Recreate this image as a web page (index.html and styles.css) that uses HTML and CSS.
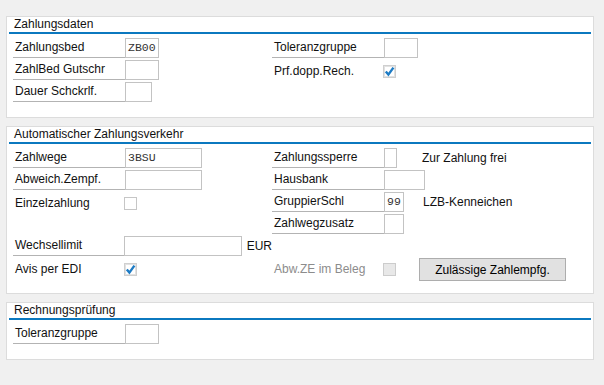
FILE: index.html
```html
<!DOCTYPE html>
<html lang="de">
<head>
  <meta charset="UTF-8" />
  <title>Zahlungsverkehr</title>
  <link rel="stylesheet" href="styles.css">
</head>
<body>
  <div class="group">
    <div class="title">Zahlungsdaten</div>
    <div class="grid">
      <div class="cell"><span class="lbl">Zahlungsbed</span><span class="inp w34">ZB00</span></div>
      <div class="cell"><span class="lbl">Toleranzgruppe</span><span class="inp w34"></span></div>
      <div class="cell"><span class="lbl">ZahlBed Gutschr</span><span class="inp w34"></span></div>
      <div class="cell chk"><span class="lbl plain">Prf.dopp.Rech.</span><span class="box on"><svg viewBox="0 0 11 11"><path d="M1.8 5.4 L4.4 8.6 L9.4 1.6"/></svg></span></div>
      <div class="cell"><span class="lbl">Dauer Schckrlf.</span><span class="inp w27"></span></div>
      <div class="cell"></div>
    </div>
  </div>

  <div class="group">
    <div class="title">Automatischer Zahlungsverkehr</div>
    <div class="grid">
      <div class="cell"><span class="lbl">Zahlwege</span><span class="inp w77">3BSU</span></div>
      <div class="cell"><span class="lbl">Zahlungssperre</span><span class="inp w13"></span><span class="note n25">Zur Zahlung frei</span></div>
      <div class="cell"><span class="lbl">Abweich.Zempf.</span><span class="inp w77"></span></div>
      <div class="cell"><span class="lbl">Hausbank</span><span class="inp w41"></span></div>
      <div class="cell chk"><span class="lbl plain">Einzelzahlung</span><span class="box"></span></div>
      <div class="cell"><span class="lbl">GruppierSchl</span><span class="inp w20">99</span><span class="note n18">LZB-Kenneichen</span></div>
      <div class="cell"></div>
      <div class="cell"><span class="lbl">Zahlwegzusatz</span><span class="inp w20"></span></div>
      <div class="cell"><span class="lbl">Wechsellimit</span><span class="inp w118"></span><span class="note n5">EUR</span></div>
      <div class="cell"></div>
      <div class="cell chk"><span class="lbl plain">Avis per EDI</span><span class="box on"><svg viewBox="0 0 11 11"><path d="M1.8 5.4 L4.4 8.6 L9.4 1.6"/></svg></span></div>
      <div class="cell chk"><span class="lbl plain off">Abw.ZE im Beleg</span><span class="box dis"></span><button class="btn">Zulässige Zahlempfg.</button></div>
    </div>
  </div>

  <div class="group">
    <div class="title">Rechnungsprüfung</div>
    <div class="grid">
      <div class="cell"><span class="lbl">Toleranzgruppe</span><span class="inp w34"></span></div>
      <div class="cell"></div>
    </div>
  </div>
</body>
</html>
```

FILE: styles.css
```css
* {
  box-sizing: border-box;
}
body {
  margin: 16px 10px 0 6px;
  background: #f0f0f0;
  font-family: "Liberation Sans", Arial, sans-serif;
  font-size: 12px;
  color: #111;
}
.group {
  background: #fff;
  border: 1px solid #dcdcdc;
  padding-bottom: 13px;
  margin-bottom: 8px;
}
.title {
  margin: 0 2px 4px;
  padding-left: 5px;
  height: 17px;
  line-height: 15px;
  border-bottom: 2px solid #0b78bf;
}
.grid {
  display: grid;
  grid-template-columns: 259px 1fr;
  grid-auto-rows: 22px;
  padding-left: 6px;
}
.cell {
  display: flex;
  align-items: flex-start;
}
.cell.chk {
  align-items: center;
}
.lbl {
  width: 112px;
  height: 20px;
  line-height: 19px;
  padding-left: 2px;
  border-bottom: 1px solid #b3b3b3;
  white-space: nowrap;
}
.lbl.plain {
  width: 111px;
  border-bottom: none;
  line-height: 22px;
  height: 22px;
}
.lbl.off {
  color: #8c8c8c;
}
.inp {
  height: 20px;
  border: 1px solid #c3c3c3;
  font-family: "Liberation Mono", "Courier New", monospace;
  font-size: 11.5px;
  line-height: 18px;
  padding-left: 2px;
  color: #333;
}
.w13 { width: 13px; }
.w20 { width: 20px; }
.w27 { width: 27px; }
.w34 { width: 34px; }
.w41 { width: 41px; }
.w77 { width: 77px; }
.w118 { width: 118px; }
.note {
  line-height: 20px;
}
.n5 { margin-left: 5px; }
.n18 { margin-left: 19px; }
.n25 { margin-left: 25px; }
.box {
  width: 13px;
  height: 13px;
  margin-top: 1px;
  border: 1px solid #c6c6c6;
  background: #fff;
}
.box.on {
  border-color: #cfcfcf;
  box-shadow: inset 0 0 0 1px #e2e2e2;
}
.box svg {
  display: block;
  width: 11px;
  height: 11px;
}
.box svg path {
  fill: none;
  stroke: #1d7bc4;
  stroke-width: 2.4;
}
.box.dis {
  background: #e8e8e8;
  border-color: #cccccc;
}
.btn {
  margin-left: 23px;
  width: 147px;
  height: 23px;
  margin-top: 1px;
  background: #e1e1e1;
  border: 1px solid #adadad;
  font-family: "Liberation Sans", Arial, sans-serif;
  font-size: 12px;
  color: #000;
  padding: 0;
}
```
